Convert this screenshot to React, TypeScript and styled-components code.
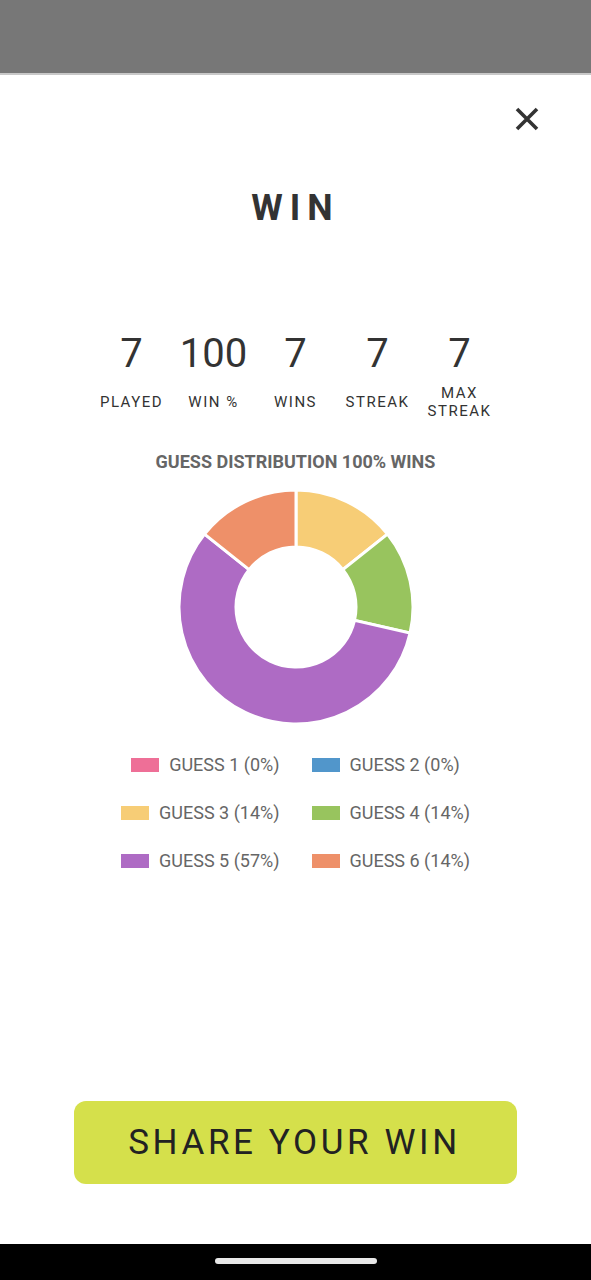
import React from "react";
import styled, { createGlobalStyle } from "styled-components";

const GlobalStyle = createGlobalStyle`
  html, body {
    margin: 0;
    padding: 0;
    background: #ffffff;
  }
  body {
    font-family: Roboto, "Liberation Sans", sans-serif;
  }
`;

const stats = [
  { value: "7", label: "PLAYED" },
  { value: "100", label: "WIN %" },
  { value: "7", label: "WINS" },
  { value: "7", label: "STREAK" },
  { value: "7", label: "MAX STREAK" },
];

const guesses = [
  { name: "GUESS 1", count: 0, color: "#ee6f97" },
  { name: "GUESS 2", count: 0, color: "#5196cb" },
  { name: "GUESS 3", count: 1, color: "#f7cd76" },
  { name: "GUESS 4", count: 1, color: "#98c45e" },
  { name: "GUESS 5", count: 4, color: "#ae6bc4" },
  { name: "GUESS 6", count: 1, color: "#ee9069" },
];

const total = guesses.reduce((s, g) => s + g.count, 0);

const polar = (cx: number, cy: number, r: number, a: number) => [
  cx + r * Math.cos(a),
  cy + r * Math.sin(a),
];

const arcPath = (start: number, end: number, ro: number, ri: number) => {
  const c = 120;
  const [x1, y1] = polar(c, c, ro, start);
  const [x2, y2] = polar(c, c, ro, end);
  const [x3, y3] = polar(c, c, ri, end);
  const [x4, y4] = polar(c, c, ri, start);
  const large = end - start > Math.PI ? 1 : 0;
  return `M${x1} ${y1} A${ro} ${ro} 0 ${large} 1 ${x2} ${y2} L${x3} ${y3} A${ri} ${ri} 0 ${large} 0 ${x4} ${y4} Z`;
};

const Donut = () => {
  let angle = -Math.PI / 2;
  const slices = guesses
    .filter((g) => g.count > 0)
    .map((g) => {
      const start = angle;
      angle += (g.count / total) * Math.PI * 2;
      return { d: arcPath(start, angle, 117, 60), color: g.color, key: g.name };
    });
  return (
    <ChartBox width="240" height="240" viewBox="0 0 240 240">
      {slices.map((s) => (
        <path key={s.key} d={s.d} fill={s.color} stroke="#fff" strokeWidth="3" />
      ))}
    </ChartBox>
  );
};

const App = () => {
  return (
    <Screen>
      <GlobalStyle />
      <StatusBar />
      <Sheet>
        <CloseRow>
          <CloseButton aria-label="close">
            <svg width="24" height="24" viewBox="0 0 24 24">
              <path d="M2 2L22 22M22 2L2 22" stroke="#333" strokeWidth="3.6" />
            </svg>
          </CloseButton>
        </CloseRow>
        <Title>WIN</Title>
        <StatsRow>
          {stats.map((s) => (
            <Stat key={s.label}>
              <StatValue>{s.value}</StatValue>
              <StatLabel>{s.label}</StatLabel>
            </Stat>
          ))}
        </StatsRow>
        <Heading>GUESS DISTRIBUTION 100% WINS</Heading>
        <Donut />
        <Legend>
          {guesses.map((g, i) => (
            <LegendItem key={g.name} $right={i % 2 === 1}>
              <Swatch style={{ background: g.color }} />
              <LegendText>
                {g.name} ({Math.round((g.count / total) * 100)}%)
              </LegendText>
            </LegendItem>
          ))}
        </Legend>
        <ShareButton>SHARE YOUR WIN</ShareButton>
      </Sheet>
      <NavBar>
        <HomePill />
      </NavBar>
    </Screen>
  );
};

export default App;

const Screen = styled.div`
  width: 591px;
  height: 1280px;
  display: flex;
  flex-direction: column;
  overflow: hidden;
`;

const StatusBar = styled.div`
  height: 73px;
  background: #777777;
  border-bottom: 2px solid #c8c8c8;
`;

const Sheet = styled.div`
  flex: 1;
  display: flex;
  flex-direction: column;
  align-items: center;
  background: #ffffff;
`;

const CloseRow = styled.div`
  align-self: stretch;
  display: flex;
  justify-content: flex-end;
  padding: 32px 52px 0 0;
`;

const CloseButton = styled.button`
  width: 24px;
  height: 24px;
  padding: 0;
  border: none;
  background: none;
  display: flex;
`;

const Title = styled.h1`
  margin: 57px 0 0 0;
  font-size: 36px;
  line-height: 40px;
  font-weight: 700;
  letter-spacing: 7px;
  color: #333333;
`;

const StatsRow = styled.div`
  margin-top: 104px;
  display: grid;
  grid-template-columns: repeat(5, 82px);
`;

const Stat = styled.div`
  display: flex;
  flex-direction: column;
  align-items: center;
  text-align: center;
`;

const StatValue = styled.div`
  font-size: 40px;
  line-height: 44px;
  color: #333333;
`;

const StatLabel = styled.div`
  margin-top: 8px;
  height: 36px;
  display: flex;
  align-items: center;
  font-size: 15px;
  line-height: 18px;
  letter-spacing: 1.5px;
  color: #333333;
  max-width: 70px;
`;

const Heading = styled.div`
  margin-top: 32px;
  font-size: 18px;
  line-height: 20px;
  font-weight: 700;
  color: #666666;
`;

const ChartBox = styled.svg`
  margin-top: 15px;
  display: block;
`;

const Legend = styled.div`
  margin-top: 27px;
  display: grid;
  grid-template-columns: 1fr 1fr;
  column-gap: 32px;
  row-gap: 26px;
  width: 100%;
`;

const LegendItem = styled.div<{ $right: boolean }>`
  display: flex;
  align-items: center;
  justify-content: ${(p) => (p.$right ? "flex-start" : "flex-end")};
  gap: 10px;
`;

const Swatch = styled.span`
  width: 28px;
  height: 14px;
  display: block;
`;

const LegendText = styled.span`
  font-size: 18px;
  line-height: 22px;
  color: #666666;
`;

const ShareButton = styled.button`
  margin: auto 0 60px;
  width: 443px;
  height: 83px;
  border: none;
  border-radius: 12px;
  background: #d5e04b;
  font-family: Roboto, "Liberation Sans", sans-serif;
  font-size: 35px;
  letter-spacing: 3.6px;
  padding-left: 4px;
  color: #222222;
`;

const NavBar = styled.div`
  height: 36px;
  background: #000000;
  display: flex;
  justify-content: center;
  padding-top: 14px;
  box-sizing: border-box;
`;

const HomePill = styled.div`
  width: 162px;
  height: 6px;
  border-radius: 3px;
  background: #e8e8e8;
`;
